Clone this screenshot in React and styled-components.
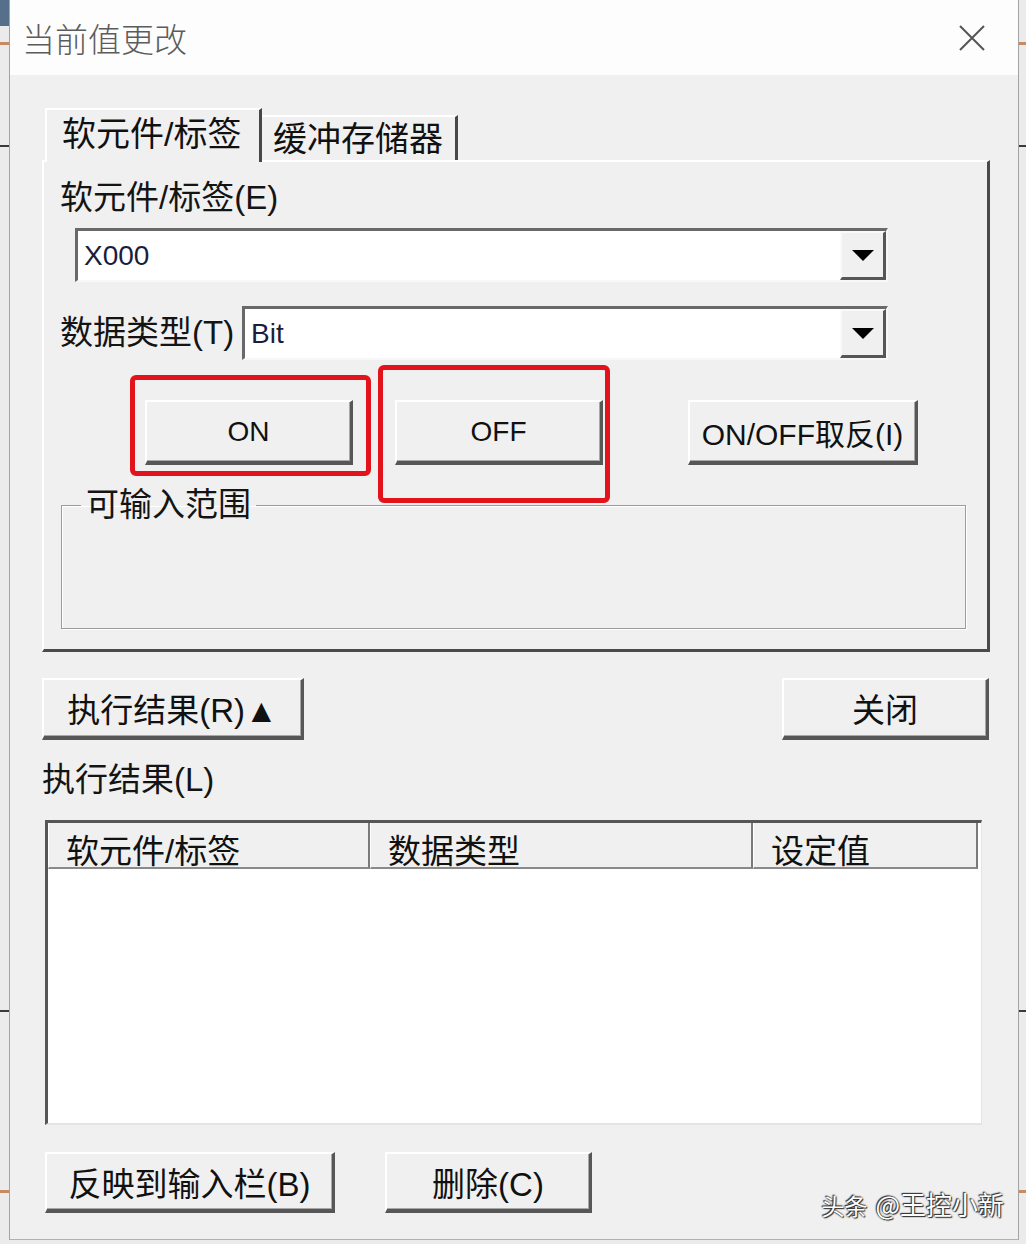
import React from "react";
import styled, { createGlobalStyle } from "styled-components";

const GlobalStyle = createGlobalStyle`
  html, body { margin: 0; padding: 0; }
  body {
    width: 1026px;
    height: 1244px;
    overflow: hidden;
    font-family: "Liberation Sans", "Noto Sans CJK SC", sans-serif;
  }
  * { box-sizing: border-box; }
`;

const Screen = styled.div`
  width: 1026px;
  height: 1244px;
  padding: 0 7px 4px 9px;
  display: flex;
  background:
    linear-gradient(#56708c, #56708c) 0 0 / 9px 26px no-repeat,
    linear-gradient(#c98a62, #c98a62) 0 42px / 100% 3px no-repeat,
    linear-gradient(#3a3a3a, #3a3a3a) 0 145px / 100% 2px no-repeat,
    linear-gradient(#3a3a3a, #3a3a3a) 0 1010px / 100% 2px no-repeat,
    linear-gradient(#c98a62, #c98a62) 0 1190px / 100% 3px no-repeat,
    #ebebeb;
`;

const Window = styled.div`
  position: relative;
  flex: 1;
  display: flex;
  flex-direction: column;
  border-left: 1px solid #a3a3a3;
  border-right: 1px solid #a3a3a3;
  border-bottom: 1px solid #b0b0b0;
`;

const TitleBar = styled.div`
  height: 75px;
  background: #fdfdfd;
  display: flex;
  align-items: center;
  justify-content: space-between;
  padding: 0 32px 0 12px;
`;

const Title = styled.div`
  font-family: "Noto Sans CJK SC", sans-serif;
  font-size: 33px;
  font-weight: 300;
  color: #5c5c5c;
  line-height: 40px;
`;

const CloseIcon = styled.svg`
  width: 28px;
  height: 28px;
  display: block;
`;

const Body = styled.div`
  flex: 1;
  background: #f0f0f0;
  padding: 33px 27px 25px 32px;
  display: flex;
  flex-direction: column;
`;

const TabStrip = styled.div`
  height: 52px;
  display: flex;
  align-items: flex-end;
  padding-left: 3px;
`;

const Tab = styled.div`
  position: relative;
  z-index: ${(p) => (p.$active ? 1 : 0)};
  height: ${(p) => (p.$active ? "54px" : "45px")};
  margin-bottom: ${(p) => (p.$active ? "-2px" : "0")};
  width: ${(p) => p.$w}px;
  background: #f0f0f0;
  border-top: 2px solid #ffffff;
  border-left: ${(p) => (p.$active ? "2px solid #ffffff" : "none")};
  border-right: 3px solid #474747;
  padding-left: ${(p) => (p.$active ? "15px" : "11px")};
  font-size: 34px;
  line-height: ${(p) => (p.$active ? "48px" : "44px")};
  color: #111;
  white-space: nowrap;
`;

const Panel = styled.div`
  width: 948px;
  height: 492px;
  border-top: 2px solid #ffffff;
  border-left: 2px solid #ffffff;
  border-right: 3px solid #4a4a4a;
  border-bottom: 3px solid #4a4a4a;
  padding: 16px 0 0 16px;
  display: flex;
  flex-direction: column;
`;

const FieldLabel = styled.div`
  font-size: 33px;
  line-height: 40px;
  color: #141414;
  white-space: nowrap;
  width: ${(p) => (p.$w ? `${p.$w}px` : "auto")};
  flex-shrink: 0;
`;

const Combo = styled.div`
  width: ${(p) => p.$w}px;
  height: 54px;
  margin-left: ${(p) => p.$ml || 0}px;
  margin-top: ${(p) => p.$mt || 0}px;
  background: #ffffff;
  border-top: 3px solid #696969;
  border-left: 3px solid #696969;
  border-right: 2px solid #f7f7f7;
  border-bottom: 2px solid #f7f7f7;
  display: flex;
  align-items: stretch;
`;

const ComboText = styled.div`
  flex: 1;
  padding-left: 6px;
  font-size: 28px;
  line-height: 49px;
  color: #1c1c3c;
`;

const DropButton = styled.div`
  width: 46px;
  background: #f0f0f0;
  border-top: 2px solid #fafafa;
  border-left: 2px solid #fafafa;
  border-right: 3px solid #565656;
  border-bottom: 3px solid #565656;
  display: flex;
  align-items: center;
  justify-content: center;
`;

const Arrow = styled.span`
  width: 0;
  height: 0;
  border-left: 11px solid transparent;
  border-right: 11px solid transparent;
  border-top: 11px solid #000;
`;

const Row = styled.div`
  display: flex;
  align-items: center;
  margin-top: ${(p) => p.$mt || 0}px;
  margin-left: ${(p) => p.$ml || 0}px;
`;

const Button = styled.div`
  width: ${(p) => p.$w}px;
  height: ${(p) => p.$h || 62}px;
  margin-left: ${(p) => p.$ml || 0}px;
  background: #f0f0f0;
  border-top: 2px solid #ffffff;
  border-left: 2px solid #ffffff;
  border-right: 3px solid #575757;
  border-bottom: 4px solid #575757;
  box-shadow: inset -1px -1px 0 #a8a8a8;
  display: flex;
  align-items: center;
  justify-content: center;
  font-size: ${(p) => p.$fs || 33}px;
  color: #111;
  white-space: nowrap;
  flex-shrink: 0;
`;

const Annotated = styled.div`
  position: relative;
  margin-left: ${(p) => p.$ml || 0}px;
  flex-shrink: 0;
`;

const RedBox = styled.div`
  position: absolute;
  left: ${(p) => p.$l}px;
  top: ${(p) => p.$t}px;
  width: ${(p) => p.$w}px;
  height: ${(p) => p.$h}px;
  border: 5px solid #e3131b;
  border-radius: 6px;
  pointer-events: none;
`;

const GroupBox = styled.fieldset`
  margin: 20px 0 0 1px;
  width: 905px;
  height: 144px;
  padding: 0;
  border: 1px solid #9c9c9c;
  box-shadow: 1px 1px 0 #ffffff, inset 1px 1px 0 #ffffff;
`;

const GroupLegend = styled.legend`
  margin-left: 19px;
  padding: 0 5px;
  font-size: 33px;
  line-height: 40px;
  color: #141414;
`;

const ActionRow = styled.div`
  margin-top: 26px;
  display: flex;
  justify-content: space-between;
  padding-right: 2px;
`;

const ResultLabel = styled(FieldLabel)`
  margin-top: 20px;
`;

const ListView = styled.div`
  margin: 20px 0 0 3px;
  width: 937px;
  height: 305px;
  background: #ffffff;
  border-top: 3px solid #565656;
  border-left: 3px solid #565656;
  border-right: 1px solid #e4e4e4;
  border-bottom: 2px solid #e4e4e4;
`;

const HeaderRow = styled.div`
  display: grid;
  grid-template-columns: 322px 383px 225px;
  height: 46px;
`;

const HeaderCell = styled.div`
  background: #f0f0f0;
  border-left: 1px solid #ffffff;
  border-right: 2px solid #7a7a7a;
  border-bottom: 2px solid #8a8a8a;
  padding: 7px 0 0 17px;
  font-size: 33px;
  line-height: 44px;
  color: #111;
  overflow: hidden;
  white-space: nowrap;
`;

const BottomRow = styled.div`
  margin: 27px 0 0 3px;
  display: flex;
  gap: 50px;
`;

const Watermark = styled.div`
  position: absolute;
  right: 14px;
  bottom: 17px;
  font-family: "Noto Sans CJK SC", sans-serif;
  font-size: 26px;
  line-height: 34px;
  color: #ffffff;
  text-shadow: 0 0 2px #222, 1px 1px 1px #333, -1px -1px 1px #333;
  white-space: nowrap;
`;

const WmSmall = styled.span`
  font-size: 23px;
  margin-right: 8px;
`;

function ComboBox({ w, ml, mt, value }) {
  return (
    <Combo $w={w} $ml={ml} $mt={mt}>
      <ComboText>{value}</ComboText>
      <DropButton>
        <Arrow />
      </DropButton>
    </Combo>
  );
}

export default function App() {
  return (
    <>
      <GlobalStyle />
      <Screen>
        <Window>
          <TitleBar>
            <Title>当前值更改</Title>
            <CloseIcon viewBox="0 0 28 28">
              <path d="M2 2 L26 26 M26 2 L2 26" stroke="#555" strokeWidth="2" fill="none" />
            </CloseIcon>
          </TitleBar>
          <Body>
            <TabStrip>
              <Tab $active $w={217}>软元件/标签</Tab>
              <Tab $w={196}>缓冲存储器</Tab>
            </TabStrip>
            <Panel>
              <FieldLabel>软元件/标签(E)</FieldLabel>
              <ComboBox w={813} ml={15} mt={10} value="X000" />
              <Row $mt={24}>
                <FieldLabel $w={182}>数据类型(T)</FieldLabel>
                <ComboBox w={646} value="Bit" />
              </Row>
              <Row $mt={40} $ml={85}>
                <Annotated>
                  <Button $w={208} $h={65} $fs={28}>ON</Button>
                  <RedBox $l={-15} $t={-25} $w={241} $h={101} />
                </Annotated>
                <Annotated $ml={42}>
                  <Button $w={208} $h={65} $fs={28}>OFF</Button>
                  <RedBox $l={-17} $t={-35} $w={232} $h={138} />
                </Annotated>
                <Button $w={230} $h={65} $fs={30} $ml={85}>ON/OFF取反(I)</Button>
              </Row>
              <GroupBox>
                <GroupLegend>可输入范围</GroupLegend>
              </GroupBox>
            </Panel>
            <ActionRow>
              <Button $w={262} $h={62}>执行结果(R)▲</Button>
              <Button $w={207} $h={62}>关闭</Button>
            </ActionRow>
            <ResultLabel>执行结果(L)</ResultLabel>
            <ListView>
              <HeaderRow>
                <HeaderCell>软元件/标签</HeaderCell>
                <HeaderCell>数据类型</HeaderCell>
                <HeaderCell>设定值</HeaderCell>
              </HeaderRow>
            </ListView>
            <BottomRow>
              <Button $w={290} $h={61}>反映到输入栏(B)</Button>
              <Button $w={207} $h={61}>删除(C)</Button>
            </BottomRow>
          </Body>
          <Watermark>
            <WmSmall>头条</WmSmall>@王控小新
          </Watermark>
        </Window>
      </Screen>
    </>
  );
}
